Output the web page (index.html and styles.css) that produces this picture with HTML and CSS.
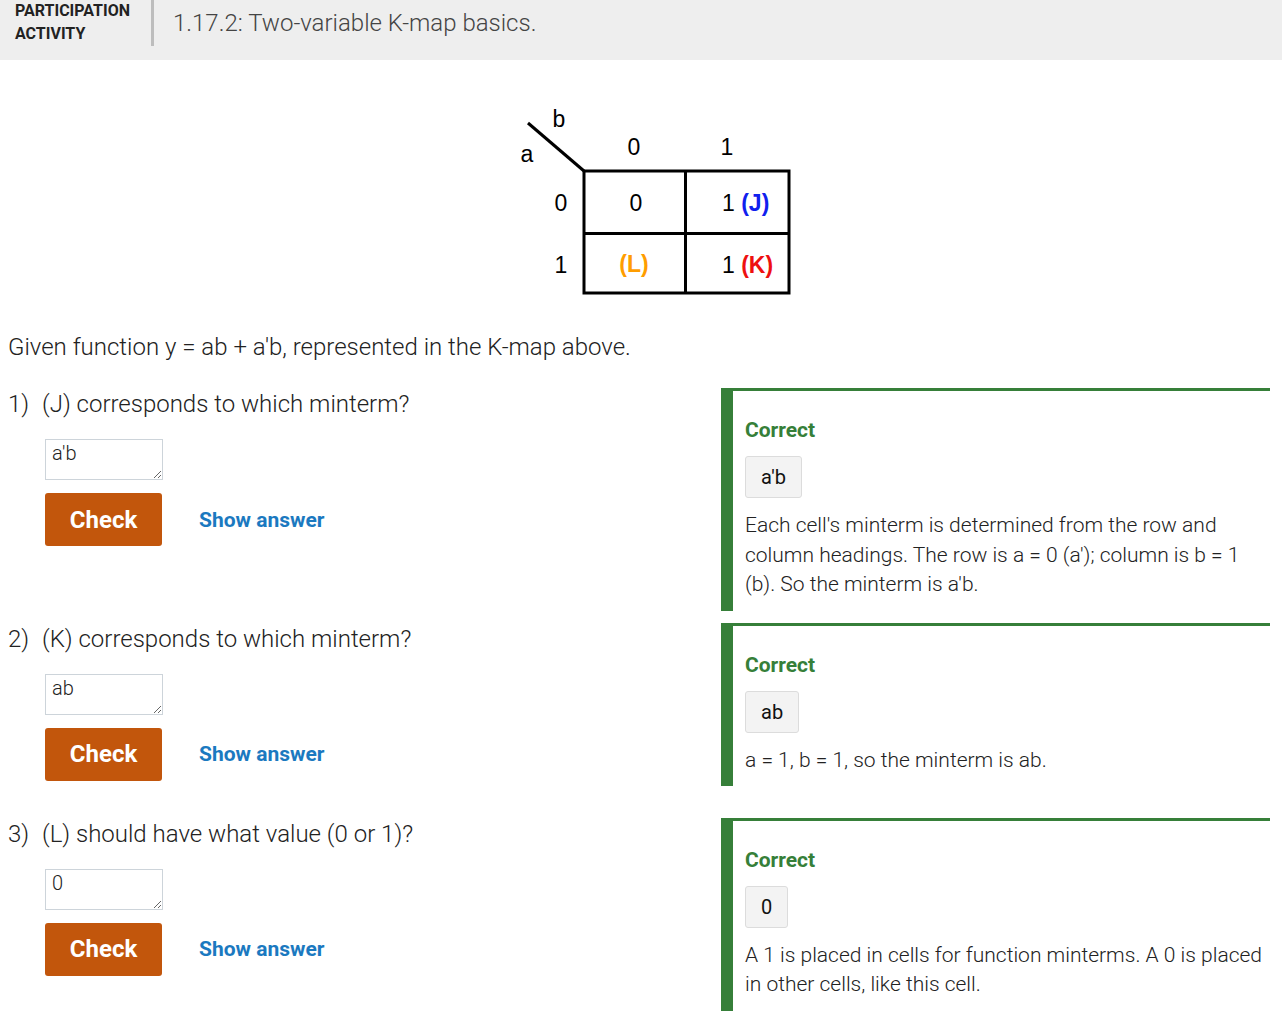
FILE: index.html
```html
<!DOCTYPE html>
<html lang="en">
<head>
<meta charset="utf-8">
<title>Two-variable K-map basics</title>
<link rel="stylesheet" href="styles.css">
</head>
<body>
<header class="activity-header">
  <div class="activity-label">PARTICIPATION<br>ACTIVITY</div>
  <div class="activity-title">1.17.2: Two-variable K-map basics.</div>
</header>

<main class="content">
  <div class="figure">
    <svg class="kmap" width="310" height="200" viewBox="486 100 310 200" xmlns="http://www.w3.org/2000/svg">
      <g stroke="#000" stroke-width="3" fill="none">
        <line x1="528" y1="123" x2="584" y2="171"/>
        <rect x="584" y="171" width="205" height="122"/>
        <line x1="685.5" y1="171" x2="685.5" y2="293"/>
        <line x1="584" y1="233.5" x2="789" y2="233.5"/>
      </g>
      <g font-family="Liberation Sans, Arial, sans-serif" font-size="23" fill="#000" text-anchor="middle">
        <text x="559" y="127">b</text>
        <text x="527" y="162">a</text>
        <text x="634" y="155">0</text>
        <text x="727" y="155">1</text>
        <text x="561" y="211">0</text>
        <text x="561" y="273">1</text>
        <text x="636" y="211">0</text>
        <text x="634" y="272" font-weight="bold" fill="#ff9d00">(L)</text>
      </g>
      <g font-family="Liberation Sans, Arial, sans-serif" font-size="23" fill="#000">
        <text x="722" y="211">1 <tspan font-weight="bold" fill="#1020ee">(J)</tspan></text>
        <text x="722" y="273">1 <tspan font-weight="bold" fill="#ee1010">(K)</tspan></text>
      </g>
    </svg>
  </div>

  <p class="intro">Given function y = ab + a'b, represented in the K-map above.</p>

  <section class="question">
    <div class="question-main">
      <div class="prompt"><span class="num">1)</span><span>(J) corresponds to which minterm?</span></div>
      <div class="answer-area">
        <textarea class="answer-input">a'b</textarea>
        <div class="actions">
          <button class="check-btn">Check</button>
          <button class="show-btn">Show answer</button>
        </div>
      </div>
    </div>
    <div class="feedback">
      <div class="fb-title">Correct</div>
      <div class="fb-answer">a'b</div>
      <div class="fb-text">Each cell's minterm is determined from the row and column headings. The row is a = 0 (a'); column is b = 1 (b). So the minterm is a'b.</div>
    </div>
  </section>

  <section class="question">
    <div class="question-main">
      <div class="prompt"><span class="num">2)</span><span>(K) corresponds to which minterm?</span></div>
      <div class="answer-area">
        <textarea class="answer-input">ab</textarea>
        <div class="actions">
          <button class="check-btn">Check</button>
          <button class="show-btn">Show answer</button>
        </div>
      </div>
    </div>
    <div class="feedback">
      <div class="fb-title">Correct</div>
      <div class="fb-answer">ab</div>
      <div class="fb-text">a = 1, b = 1, so the minterm is ab.</div>
    </div>
  </section>

  <section class="question">
    <div class="question-main">
      <div class="prompt"><span class="num">3)</span><span>(L) should have what value (0 or 1)?</span></div>
      <div class="answer-area">
        <textarea class="answer-input">0</textarea>
        <div class="actions">
          <button class="check-btn">Check</button>
          <button class="show-btn">Show answer</button>
        </div>
      </div>
    </div>
    <div class="feedback">
      <div class="fb-title">Correct</div>
      <div class="fb-answer">0</div>
      <div class="fb-text">A 1 is placed in cells for function minterms. A 0 is placed in other cells, like this cell.</div>
    </div>
  </section>
</main>
</body>
</html>
```

FILE: styles.css
```css
* { box-sizing: border-box; }

html, body {
  margin: 0;
  padding: 0;
  background: #fff;
  font-family: Roboto, "Noto Sans", sans-serif;
  color: #222;
}

.activity-header {
  display: flex;
  align-items: flex-start;
  height: 60px;
  background: #eeeeee;
}

.activity-label {
  width: 151px;
  padding-left: 15px;
  margin-top: -1px;
  font-size: 16px;
  line-height: 23px;
  font-weight: 700;
  color: #222;
}

.activity-title {
  height: 46px;
  border-left: 3px solid #bdbdbd;
  padding-left: 19px;
  padding-top: 7px;
  font-size: 24px;
  line-height: 32px;
  font-weight: 300;
  color: #444;
}

.content {
  padding: 0 12px 0 8px;
}

.figure {
  display: flex;
  justify-content: center;
  margin-top: 40px;
  margin-left: -8px;
  margin-right: -12px;
}

.kmap { display: block; }

.intro {
  margin: 31px 0 25px 0;
  font-size: 24px;
  line-height: 32px;
  font-weight: 300;
  color: #222;
}

.question {
  display: flex;
  align-items: flex-start;
  margin-bottom: 12px;
}

.question-main {
  flex: 1;
  padding-bottom: 25px;
}

.prompt {
  display: flex;
  font-size: 24px;
  line-height: 32px;
  font-weight: 300;
  color: #222;
}

.num {
  width: 34px;
  flex: none;
}

.answer-area {
  padding-left: 37px;
}

.answer-input {
  display: block;
  width: 118px;
  height: 41px;
  margin-top: 19px;
  padding: 1px 6px;
  border: 1px solid #cdd4da;
  border-radius: 0;
  font-family: Roboto, sans-serif;
  font-size: 20px;
  line-height: 24px;
  font-weight: 300;
  color: #222;
  background: #fff;
}

.actions {
  display: flex;
  align-items: center;
  margin-top: 13px;
}

.check-btn {
  width: 117px;
  height: 53px;
  border: none;
  border-radius: 3px;
  background: #c2560c;
  color: #fff;
  font-family: Roboto, sans-serif;
  font-weight: 700;
  font-size: 24px;
}

.show-btn {
  margin-left: 37px;
  padding: 0;
  border: none;
  background: none;
  color: #1b79c0;
  font-family: Roboto, sans-serif;
  font-weight: 700;
  font-size: 21px;
}

.feedback {
  width: 549px;
  flex: none;
  border-top: 3px solid #367f39;
  border-left: 12px solid #367f39;
  padding: 27px 2px 11px 12px;
}

.fb-title {
  font-size: 21px;
  line-height: 24px;
  font-weight: 700;
  color: #367f39;
}

.fb-answer {
  display: inline-block;
  margin-top: 14px;
  height: 42px;
  padding: 0 15px;
  border: 1px solid #dcdcdc;
  border-radius: 3px;
  background: #f3f3f3;
  font-size: 20px;
  line-height: 40px;
  font-weight: 400;
  color: #111;
}

.fb-text {
  margin-top: 13px;
  font-size: 21px;
  line-height: 29.5px;
  font-weight: 300;
  color: #222;
}
```
